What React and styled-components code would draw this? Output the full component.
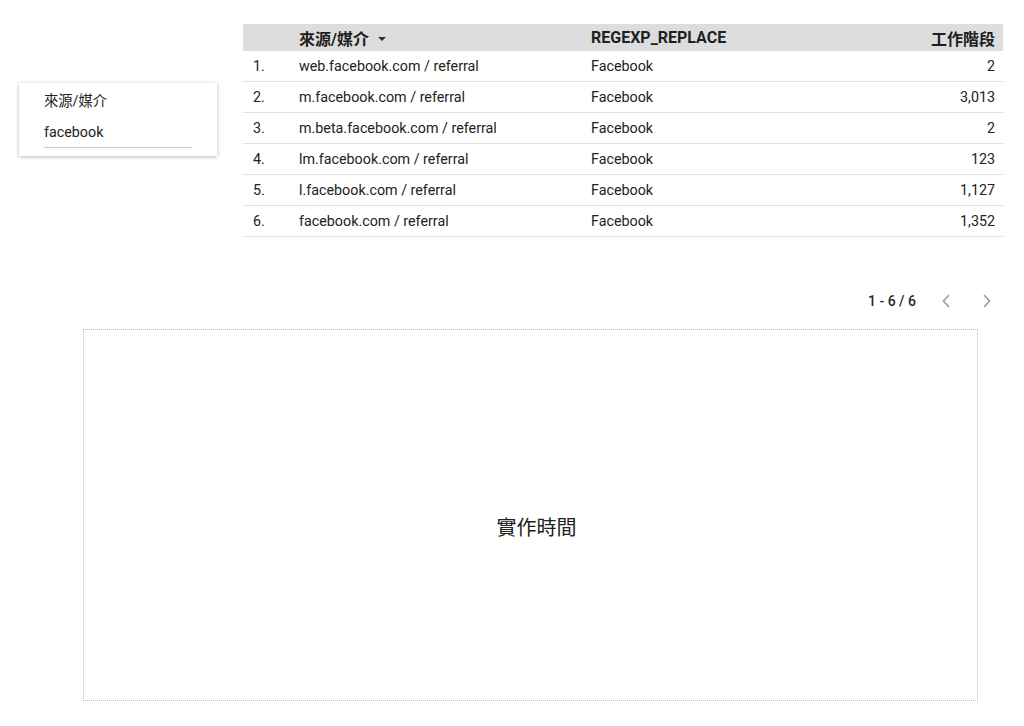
import React from 'react';
import styled, { createGlobalStyle } from 'styled-components';

const GlobalStyle = createGlobalStyle`
  body {
    margin: 0;
    background: #fff;
    font-family: Roboto, "Noto Sans CJK TC", sans-serif;
    color: #212121;
  }
`;

const Page = styled.div`
  width: 1024px;
  height: 726px;
  position: relative;
  overflow: hidden;
`;

const TopArea = styled.div`
  display: flex;
  align-items: flex-start;
  padding-top: 24px;
`;

const FilterCard = styled.div`
  margin: 59px 0 0 19px;
  width: 198px;
  height: 73px;
  box-sizing: border-box;
  padding: 10px 25px 0 25px;
  background: #fff;
  box-shadow: 0 1px 4px rgba(0, 0, 0, 0.28);
`;

const FilterLabel = styled.div`
  font-size: 14.3px;
  line-height: 17px;
  color: #222;
`;

const FilterValue = styled.div`
  margin-top: 14px;
  font-size: 14.3px;
  line-height: 17px;
  padding-bottom: 6px;
  border-bottom: 1px solid #c8c8c8;
`;

const TableWrap = styled.div`
  margin-left: 26px;
  width: 760px;
`;

const Table = styled.div`
  display: grid;
  grid-template-columns: 56px 292px 1fr 120px;
`;

const HeadCell = styled.div`
  background: #dddddd;
  height: 27px;
  display: flex;
  align-items: center;
  font-size: 16px;
  font-weight: 700;
  color: #1f1f1f;
  justify-content: ${p => (p.right ? 'flex-end' : 'flex-start')};
  padding-right: ${p => (p.right ? '8px' : '0')};
`;

const Cell = styled.div`
  height: 31px;
  box-sizing: border-box;
  border-bottom: 1px solid #e0e0e0;
  display: flex;
  align-items: center;
  font-size: 14.3px;
  color: #222;
  justify-content: ${p => (p.right ? 'flex-end' : 'flex-start')};
  padding-left: ${p => (p.index ? '10px' : '0')};
  padding-right: ${p => (p.right ? '8px' : '0')};
`;

const SortCaret = styled.span`
  display: inline-block;
  margin-left: 9px;
  width: 0;
  height: 0;
  border-left: 4px solid transparent;
  border-right: 4px solid transparent;
  border-top: 4.5px solid #333;
  transform: translateY(1px);
`;

const Pager = styled.div`
  display: flex;
  justify-content: flex-end;
  align-items: center;
  margin-top: 56px;
  font-size: 14px;
  font-weight: 500;
  color: #2a2a2a;
  padding-right: 6px;
`;

const PagerText = styled.span`
  margin-right: 20px;
`;

const PagerButton = styled.span`
  width: 20px;
  display: flex;
  justify-content: center;
  margin-left: ${p => (p.gap ? '21px' : '0')};
`;

const Placeholder = styled.div`
  margin: 20px 0 0 83px;
  width: 895px;
  height: 372px;
  box-sizing: border-box;
  border: 1px dotted #bdbdbd;
  display: flex;
  align-items: center;
  justify-content: center;
  font-size: 20px;
  color: #222;
  padding: 22px 0 0 12px;
`;

const rows = [
  ['web.facebook.com / referral', 'Facebook', '2'],
  ['m.facebook.com / referral', 'Facebook', '3,013'],
  ['m.beta.facebook.com / referral', 'Facebook', '2'],
  ['lm.facebook.com / referral', 'Facebook', '123'],
  ['l.facebook.com / referral', 'Facebook', '1,127'],
  ['facebook.com / referral', 'Facebook', '1,352'],
];

const Chevron = ({ dir }) => (
  <svg width="10" height="16" viewBox="0 0 10 16">
    <path
      d={dir === 'left' ? 'M8 2 L2.5 8 L8 14' : 'M2 2 L7.5 8 L2 14'}
      fill="none"
      stroke="#9e9e9e"
      strokeWidth="1.7"
    />
  </svg>
);

export default function App() {
  return (
    <Page>
      <GlobalStyle />
      <TopArea>
        <FilterCard>
          <FilterLabel>來源/媒介</FilterLabel>
          <FilterValue>facebook</FilterValue>
        </FilterCard>
        <TableWrap>
          <Table>
            <HeadCell />
            <HeadCell>
              來源/媒介<SortCaret />
            </HeadCell>
            <HeadCell>REGEXP_REPLACE</HeadCell>
            <HeadCell right>工作階段</HeadCell>
            {rows.map((r, i) => (
              <React.Fragment key={i}>
                <Cell index>{i + 1}.</Cell>
                <Cell>{r[0]}</Cell>
                <Cell>{r[1]}</Cell>
                <Cell right>{r[2]}</Cell>
              </React.Fragment>
            ))}
          </Table>
          <Pager>
            <PagerText>1 - 6 / 6</PagerText>
            <PagerButton>
              <Chevron dir="left" />
            </PagerButton>
            <PagerButton gap>
              <Chevron dir="right" />
            </PagerButton>
          </Pager>
        </TableWrap>
      </TopArea>
      <Placeholder>實作時間</Placeholder>
    </Page>
  );
}
